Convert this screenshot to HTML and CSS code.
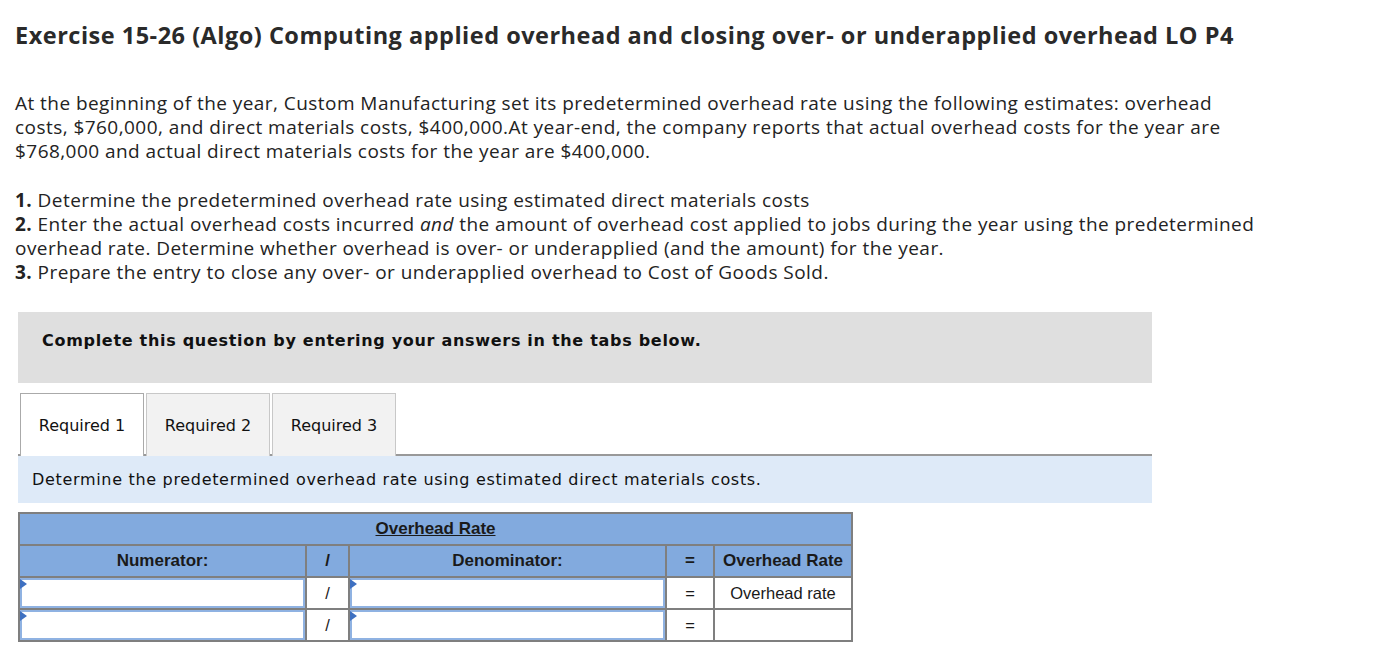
FILE: index.html
```html
<!DOCTYPE html>
<html lang="en">
<head>
<meta charset="utf-8">
<title>Exercise 15-26</title>
<link rel="stylesheet" href="styles.css">
</head>
<body>
<main class="page">
  <h1 class="title">Exercise 15-26 (Algo) Computing applied overhead and closing over- or underapplied overhead LO P4</h1>
  <p class="intro">At the beginning of the year, Custom Manufacturing set its predetermined overhead rate using the following estimates: overhead<br>costs, $760,000, and direct materials costs, $400,000.At year-end, the company reports that actual overhead costs for the year are<br>$768,000 and actual direct materials costs for the year are $400,000.</p>
  <div class="steps">
    <p><b>1.</b> Determine the predetermined overhead rate using estimated direct materials costs</p>
    <p><b>2.</b> Enter the actual overhead costs incurred <i>and</i> the amount of overhead cost applied to jobs during the year using the predetermined<br>overhead rate. Determine whether overhead is over- or underapplied (and the amount) for the year.</p>
    <p><b>3.</b> Prepare the entry to close any over- or underapplied overhead to Cost of Goods Sold.</p>
  </div>

  <div class="notice">Complete this question by entering your answers in the tabs below.</div>

  <div class="tabs">
    <div class="tab active">Required 1</div>
    <div class="tab">Required 2</div>
    <div class="tab">Required 3</div>
  </div>
  <div class="instruction">Determine the predetermined overhead rate using estimated direct materials costs.</div>

  <table class="grid">
    <colgroup>
      <col class="c-num"><col class="c-op"><col class="c-den"><col class="c-eq"><col class="c-res">
    </colgroup>
    <tr class="head">
      <th colspan="5"><span class="caption">Overhead Rate</span></th>
    </tr>
    <tr class="head">
      <th>Numerator:</th>
      <th>/</th>
      <th>Denominator:</th>
      <th>=</th>
      <th>Overhead Rate</th>
    </tr>
    <tr>
      <td class="field"><div class="input"></div></td>
      <td class="op">/</td>
      <td class="field"><div class="input"></div></td>
      <td class="op">=</td>
      <td class="op">Overhead rate</td>
    </tr>
    <tr>
      <td class="field"><div class="input"></div></td>
      <td class="op">/</td>
      <td class="field"><div class="input"></div></td>
      <td class="op">=</td>
      <td class="op"></td>
    </tr>
  </table>
</main>
</body>
</html>
```

FILE: styles.css
```css
body {
  margin: 0;
  background: #fff;
  color: #232323;
  font-family: "Open Sans", Lato, sans-serif;
}
.page {
  padding: 0 0 0 15px;
  width: 1360px;
}
.title {
  margin: 22px 0 0;
  font-size: 23.5px;
  line-height: 26px;
  font-weight: 700;
  letter-spacing: 0.5px;
  color: #2a2a2a;
  white-space: nowrap;
}
.intro {
  margin: 43px 0 0;
  font-size: 19px;
  line-height: 24px;
  letter-spacing: 0.45px;
  white-space: nowrap;
}
.steps {
  margin-top: 25px;
  font-size: 19px;
  line-height: 24px;
  letter-spacing: 0.45px;
  white-space: nowrap;
}
.steps p {
  margin: 0;
}
.notice {
  margin: 28px 0 0 3px;
  width: 1134px;
  height: 71px;
  box-sizing: border-box;
  padding: 18px 0 0 24px;
  background: #dfdfdf;
  font-family: Verdana, "DejaVu Sans", sans-serif;
  font-weight: 700;
  font-size: 16px;
  line-height: 22px;
  letter-spacing: 0.7px;
  color: #111;
}
.tabs {
  display: flex;
  gap: 2px;
  margin: 10px 0 0 3px;
  padding-left: 2px;
  width: 1132px;
  border-bottom: 2px solid #999;
  height: 61px;
  font-family: Verdana, "DejaVu Sans", sans-serif;
  font-size: 16px;
}
.tab {
  width: 124px;
  height: 63px;
  box-sizing: border-box;
  border: 1px solid #c8c8c8;
  border-bottom: none;
  background: #f2f2f2;
  display: flex;
  align-items: center;
  justify-content: center;
  color: #111;
}
.tab.active {
  background: #fff;
  border-color: #aaa;
  position: relative;
  z-index: 1;
}
.instruction {
  margin-left: 3px;
  width: 1134px;
  height: 47px;
  box-sizing: border-box;
  padding: 13px 0 0 14px;
  background: #deeaf8;
  font-family: Verdana, "DejaVu Sans", sans-serif;
  font-size: 16px;
  line-height: 22px;
  letter-spacing: 0.68px;
  color: #111;
}
.grid {
  margin: 9px 0 0 3px;
  border-collapse: collapse;
  border: 2px solid #7f7f7f;
  font-family: "Liberation Sans", Arial, sans-serif;
  color: #1a1a1a;
  table-layout: fixed;
}
.c-num { width: 287px; }
.c-op { width: 43px; }
.c-den { width: 317px; }
.c-eq { width: 48px; }
.c-res { width: 138px; }
.grid th, .grid td {
  border: 2px solid #7f7f7f;
  height: 30px;
  padding: 0;
  text-align: center;
}
.grid th {
  background: #82aade;
  font-size: 17px;
  font-weight: 700;
}
.caption {
  text-decoration: underline;
}
.grid td {
  font-size: 16.5px;
  background: #fff;
}
.grid td.field {
  position: relative;
}
.input {
  height: 30px;
  box-sizing: border-box;
  border: 2px solid #8fb2e2;
  position: relative;
}
.input::before {
  content: "";
  position: absolute;
  left: -2px;
  top: -1px;
  border-left: 7px solid #3e70c1;
  border-top: 5px solid transparent;
  border-bottom: 5px solid transparent;
}
```
